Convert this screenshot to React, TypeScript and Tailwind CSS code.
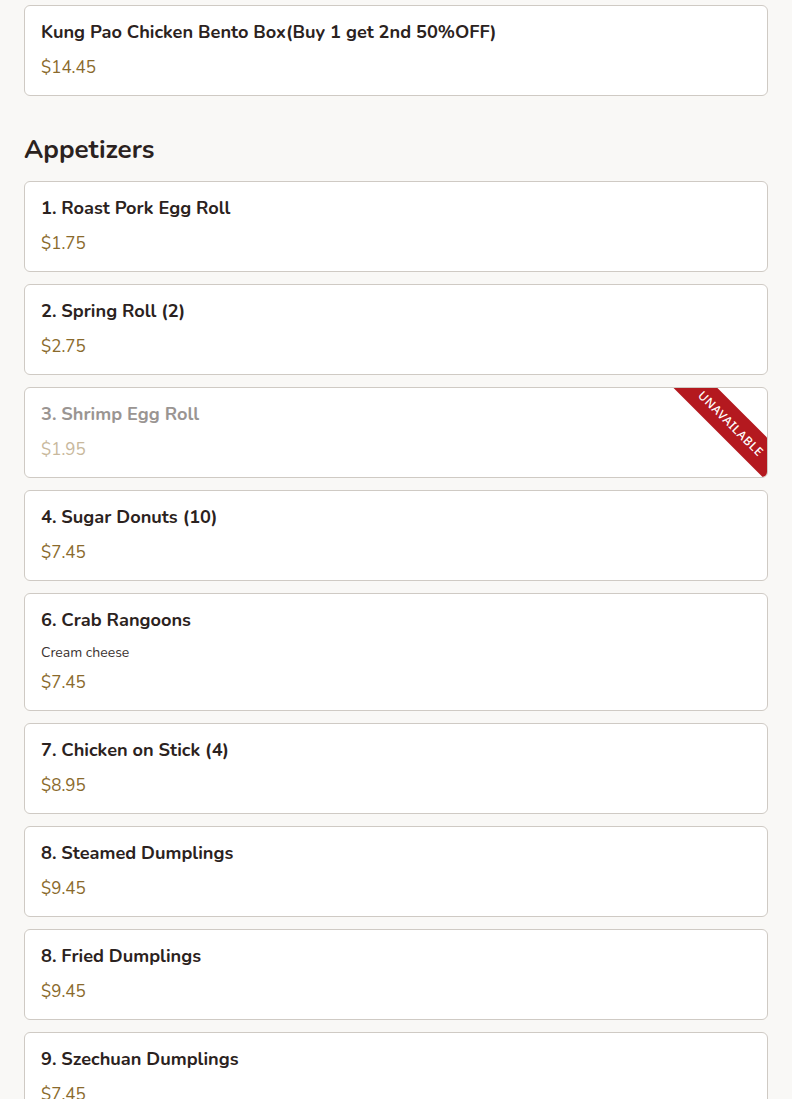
import React from "react";

interface MenuItem {
  name: string;
  price: string;
  description?: string;
  unavailable?: boolean;
}

const topItem: MenuItem = {
  name: "Kung Pao Chicken Bento Box(Buy 1 get 2nd 50%OFF)",
  price: "$14.45",
};

const appetizers: MenuItem[] = [
  { name: "1. Roast Pork Egg Roll", price: "$1.75" },
  { name: "2. Spring Roll (2)", price: "$2.75" },
  { name: "3. Shrimp Egg Roll", price: "$1.95", unavailable: true },
  { name: "4. Sugar Donuts (10)", price: "$7.45" },
  { name: "6. Crab Rangoons", price: "$7.45", description: "Cream cheese" },
  { name: "7. Chicken on Stick (4)", price: "$8.95" },
  { name: "8. Steamed Dumplings", price: "$9.45" },
  { name: "8. Fried Dumplings", price: "$9.45" },
  { name: "9. Szechuan Dumplings", price: "$7.45" },
];

const ItemCard: React.FC<{ item: MenuItem }> = ({ item }) => (
  <div className="relative overflow-hidden bg-white border border-[#cfcac4] rounded-[6px] px-4 pt-[12px] pb-[14px]">
    <h3
      className={`text-[18.2px] leading-[28px] font-bold ${
        item.unavailable ? "text-[#9a9592]" : "text-[#2b2220]"
      }`}
    >
      {item.name}
    </h3>
    {item.description && (
      <p className="mt-[9px] text-[14px] leading-[20px] text-[#3a3230]">
        {item.description}
      </p>
    )}
    <p
      className={`${item.description ? "mt-[7px]" : "mt-[9px]"} text-[17px] leading-[26px] ${
        item.unavailable ? "text-[#c8b89c]" : "text-[#8a6a2c]"
      }`}
    >
      {item.price}
    </p>
    {/* sold-out ribbon */}
    {item.unavailable && (
      <div className="absolute top-[20px] right-[-39px] w-[150px] h-[31px] rotate-45 bg-[#b4191f] flex items-center justify-center">
        <span className="text-white text-[12px] font-medium tracking-[0.6px] font-['Noto_Sans',sans-serif]">
          UNAVAILABLE
        </span>
      </div>
    )}
  </div>
);

export default function App() {
  return (
    <div
      className="min-h-screen bg-[#f9f8f6] px-6 pt-[5px]"
      style={{ fontFamily: "'Nunito', 'Noto Sans', 'Lato', sans-serif" }}
    >
      <ItemCard item={topItem} />

      <h2 className="mt-[36px] mb-[13px] text-[26px] leading-[36px] font-bold text-[#2b2220]">
        Appetizers
      </h2>

      <div className="flex flex-col gap-3">
        {appetizers.map((item) => (
          <ItemCard key={item.name} item={item} />
        ))}
      </div>
    </div>
  );
}
